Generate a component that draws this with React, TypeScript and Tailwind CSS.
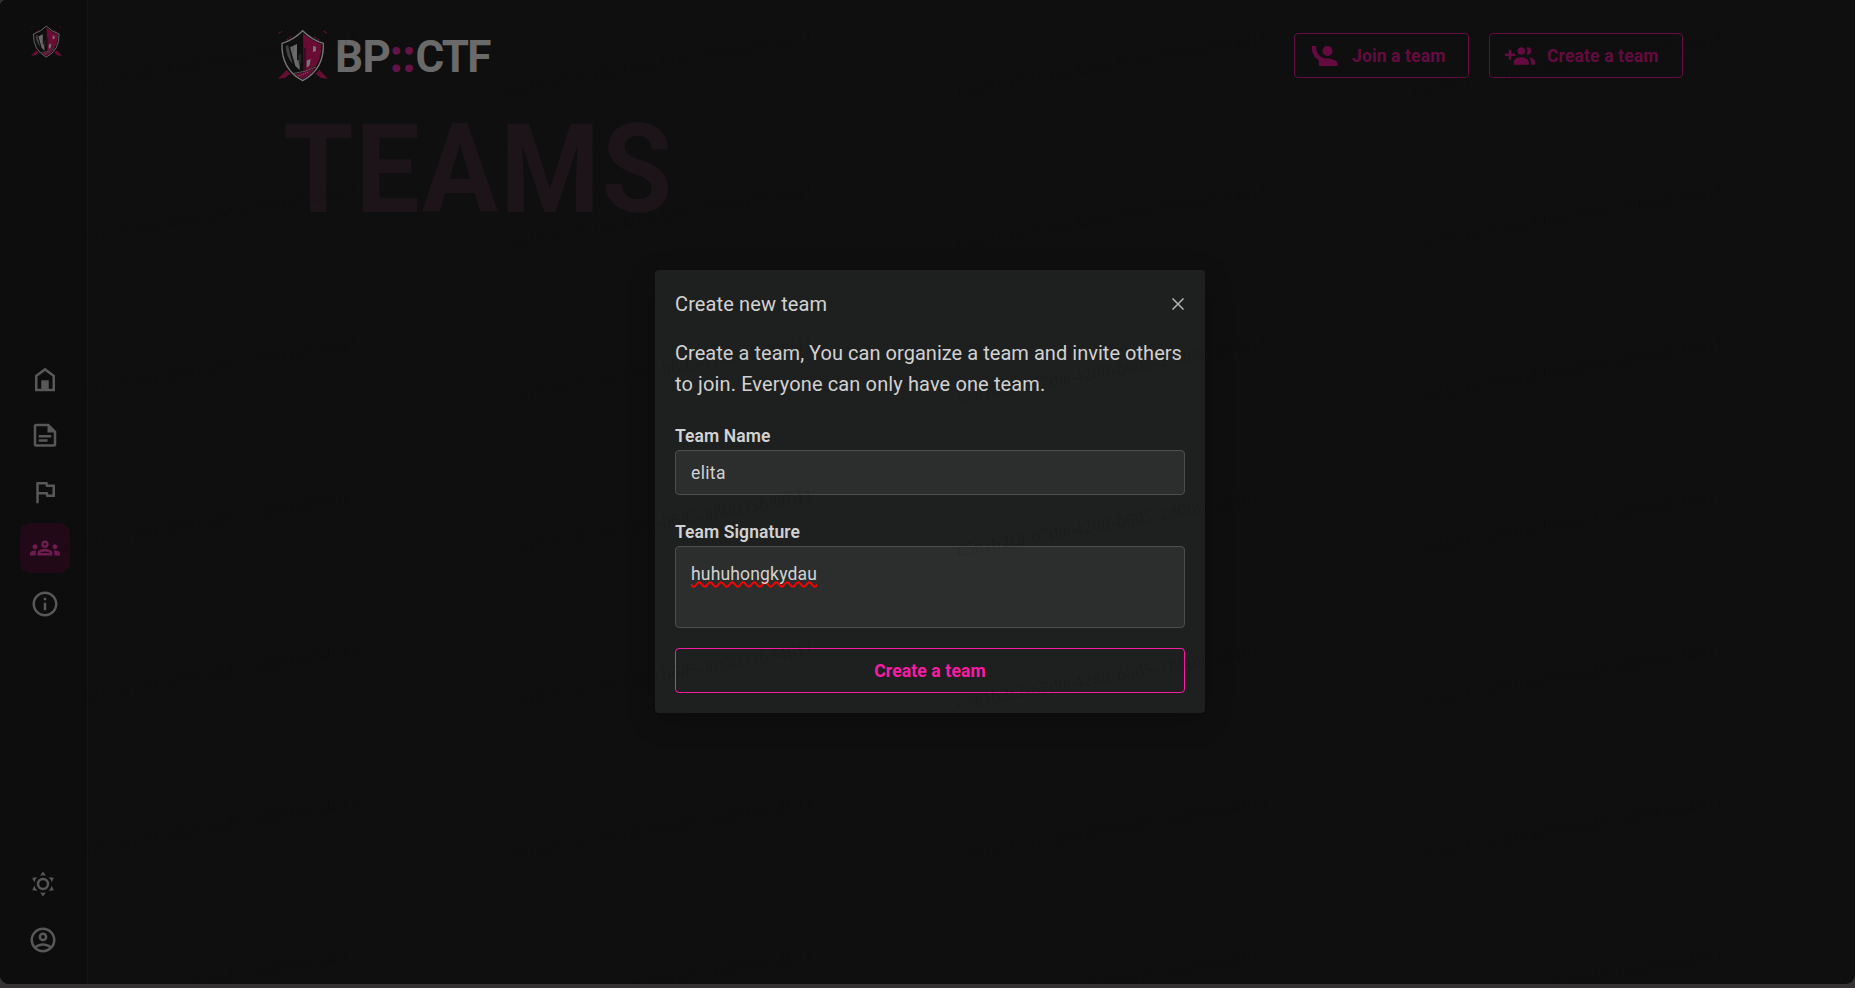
import type { ReactNode } from "react";
import { MdOutlineGroups, MdInfoOutline } from "react-icons/md";

function Icon({ children, className = "" }: { children: ReactNode; className?: string }) {
  return (
    <svg viewBox="0 0 24 24" fill="currentColor" className={`size-[30px] shrink-0 ${className}`}>
      {children}
    </svg>
  );
}

function Shield({ className }: { className: string }) {
  return (
    <svg viewBox="24 27 150 159" className={className}>
      <g stroke="#650d33" fill="none">
        <path d="M26 40l5-4M34 36l3-2M50 62l5-7M58 53l6-3M161 33l9 7M132 50l7 4M142 54l5 8M138 70l8-8M58 70l-7-8" strokeWidth="4" />
      </g>
      <path d="M24 176L50 149l11 12L45 174zM174 176L148 149l-11 12L153 174z" fill="#650d33" />
      <path
        d="M98 32Q126 60 160 70Q163 148 98 182Q33 148 36 70Q70 60 98 32z"
        fill="#101010"
        stroke="#777"
        strokeWidth="4"
      />
      <path d="M99 40Q124 62 155 73Q154 112 138 137L101 156z" fill="#6a0d35" />
      <path d="M105 84V151M97 50V140" stroke="#101010" strokeWidth="3" />
      <path d="M129 78l9 2v13l-9 3zM110 122l12-6-3 20-9 7z" fill="#777" />
      <path d="M60 82l21-10v50l8-6v34l-13-12z" fill="#6a6a6a" />
      <path d="M47 78l7-3 14 57Q49 112 47 78z" fill="#444" />
      <path d="M84 107l10-7v30l-7 5z" fill="#252525" />
      <path d="M72 162Q100 160 136 143Q124 164 98 177Q82 170 72 162z" fill="#650d33" />
      <path d="M72 160Q105 157 138 141" stroke="#777" strokeWidth="2" fill="none" />
      <path d="M86 168l32-13" stroke="#777" strokeWidth="3" strokeDasharray="3 4" fill="none" />
    </svg>
  );
}

function NavButton({ active, children }: { active?: boolean; children: ReactNode }) {
  return (
    <button
      className={`flex size-[50px] items-center justify-center rounded-[10px] ${
        active ? "bg-[#220918] text-[#6e1c52]" : "text-[#585858]"
      }`}
    >
      {children}
    </button>
  );
}

function Sidebar() {
  return (
    <aside className="flex w-[88px] shrink-0 flex-col border-r border-[#151515] bg-[#0d0d0d]">
      <div className="flex h-[355px] shrink-0 items-start pt-[25px] pl-[31px]">
        <Shield className="h-[33px] w-[31px]" />
      </div>
      <nav className="flex flex-col gap-1.5 pl-5">
        <NavButton>
          <Icon>
            <path d="M12 2.200L4 8.200v12.800h16V8.200zm0 2.500l6 4.500v9.800H6V9.200z" />
            <path d="M9 12.200h6v7.300H9z" />
          </Icon>
        </NavButton>
        <NavButton>
          <Icon>
            <path d="M5 2.200a2 2 0 0 0-2 2v14.400a2 2 0 0 0 2 2h14a2 2 0 0 0 2-2V8.200l-6-6zm0 2h9v5h5v9.400H5z" />
            <path d="M7 11.200h10v2H7zM7 14.600h7v2H7z" />
          </Icon>
        </NavButton>
        <NavButton>
          <Icon>
            <path d="m12.360 6 .4 2H18v6h-3.360l-.4-2H7V6h5.360M14 4H5v17h2v-7h5.600l.4 2h7V6h-5.600z" />
          </Icon>
        </NavButton>
        <NavButton active>
          <MdOutlineGroups className="size-[30px]" />
        </NavButton>
        <NavButton>
          <MdInfoOutline className="size-[30px]" />
        </NavButton>
      </nav>
      <div className="mt-auto mb-[19px] flex flex-col gap-1.5 pl-[18px]">
        <NavButton>
          <Icon>
            <path d="M12 7a5 5 0 0 1 5 5 5 5 0 0 1-5 5 5 5 0 0 1-5-5 5 5 0 0 1 5-5m0 2a3 3 0 0 0-3 3 3 3 0 0 0 3 3 3 3 0 0 0 3-3 3 3 0 0 0-3-3m0-7 2.390 3.420C13.650 5.150 12.840 5 12 5s-1.650.15-2.390.42zM3.340 7l4.160-.35A7.200 7.200 0 0 0 5.940 8.500c-.44.74-.69 1.500-.83 2.290zm.02 10 1.760-3.770a7.131 7.131 0 0 0 2.380 4.140zM20.650 7l-1.770 3.790a7.023 7.023 0 0 0-2.380-4.150zm-.01 10-4.140.36c.59-.51 1.120-1.140 1.540-1.860.42-.73.69-1.500.83-2.290zM12 22l-2.410-3.440c.74.27 1.550.44 2.410.44.82 0 1.630-.17 2.370-.44z" />
          </Icon>
        </NavButton>
        <NavButton>
          <Icon>
            <path d="M12 2A10 10 0 0 0 2 12a10 10 0 0 0 10 10 10 10 0 0 0 10-10A10 10 0 0 0 12 2M7.070 18.280c.43-.9 3.050-1.780 4.930-1.780s4.510.88 4.930 1.780A7.893 7.893 0 0 1 12 20c-1.860 0-3.570-.64-4.930-1.720m11.290-1.450c-1.430-1.740-4.900-2.330-6.360-2.330s-4.930.59-6.360 2.330A7.928 7.928 0 0 1 4 12c0-4.410 3.590-8 8-8s8 3.590 8 8c0 1.820-.62 3.500-1.640 4.830M12 6c-1.940 0-3.500 1.560-3.500 3.500S10.060 13 12 13s3.500-1.560 3.500-3.500S13.940 6 12 6m0 5a1.500 1.500 0 0 1-1.500-1.500A1.500 1.500 0 0 1 12 8a1.500 1.500 0 0 1 1.500 1.500A1.500 1.500 0 0 1 12 11" />
          </Icon>
        </NavButton>
      </div>
    </aside>
  );
}

function Header() {
  return (
    <header className="flex h-[78px] items-start justify-between">
      <div className="flex pt-[29px] pl-[3px]">
        <Shield className="h-[53px] w-[50px]" />
        <div className="ml-[7px] pt-px text-[44px] leading-[54px] font-bold tracking-[-0.7px] whitespace-nowrap text-[#6a6a6a]">
          BP
          <span className="font-['Noto_Sans',sans-serif] leading-none tracking-[0.400px] text-[#651248]">::</span>
          <span className="tracking-[-1.900px]">CTF</span>
        </div>
      </div>
      <div className="flex gap-5 pt-[33px] text-[17.500px] font-bold tracking-[0.130px] text-[#650b41]">
        <button className="flex h-[45px] w-[175px] items-center rounded-[4px] border border-[#650b41] pl-[15px] whitespace-nowrap">
          <Icon>
            <path d="M1.500 4v1.500c0 4.150 2.210 7.780 5.500 9.800V20h15v-2c0-2.660-5.330-4-8-4h-.25C9 14 5 10 5 5.500V4m9 0a4 4 0 0 0-4 4 4 4 0 0 0 4 4 4 4 0 0 0 4-4 4 4 0 0 0-4-4Z" />
          </Icon>
          <span className="ml-[12px] pt-[2px]">Join a team</span>
        </button>
        <button className="flex h-[45px] w-[194px] items-center rounded-[4px] border border-[#650b41] pl-[15px] whitespace-nowrap">
          <Icon>
            <path d="M19 17v2H7v-2s0-4 6-4 6 4 6 4m-3-9a3 3 0 1 0-3 3 3 3 0 0 0 3-3m3.200 5.060A5.600 5.600 0 0 1 21 17v2h3v-2s0-3.450-4.800-3.940M18 5a2.910 2.910 0 0 0-.89.14 5 5 0 0 1 0 5.720A2.910 2.910 0 0 0 18 11a3 3 0 0 0 0-6M8 10H5V7H3v3H0v2h3v3h2v-3h3z" />
          </Icon>
          <span className="ml-[12px] pt-[2px]">Create a team</span>
        </button>
      </div>
    </header>
  );
}

function Dialog() {
  return (
    <div className="absolute top-[270px] left-[655px] flex h-[443px] w-[550px] flex-col rounded-[4px] bg-[#1e201f] px-5 text-[#d2d2d2] shadow-[0_8px_30px_rgba(0,0,0,0.2)]">
      <div className="mt-[19px] flex h-[31px] items-center justify-between">
        <h2 className="text-[20px] leading-[31px] tracking-[0.120px]">Create new team</h2>
        <svg viewBox="0 0 12 12" className="mr-[1px] mb-[2px] size-3" stroke="#b5b5b5" strokeWidth="1.500">
          <path d="M.5.5l11 11M11.500.5l-11 11" />
        </svg>
      </div>
      <p className="mt-[18px] text-[20px] leading-[31px] tracking-[0.040px] whitespace-nowrap">
        Create a team, You can organize a team and invite others
        <br />
        <span className="tracking-[0.120px]">to join. Everyone can only have one team.</span>
      </p>
      <label className="mt-[22px] text-[17.500px] leading-7 font-semibold tracking-[0.080px]">Team Name</label>
      <div className="flex h-[45px] items-center rounded-[4px] border border-[#4c4e4d] bg-[#2c2e2d] px-[15px] pt-[2px] text-[17.500px] tracking-[0.350px]">
        elita
      </div>
      <label className="mt-[23px] text-[17.500px] leading-7 font-semibold tracking-[0.080px]">Team Signature</label>
      <div className="h-[82px] rounded-[4px] border border-[#4c4e4d] bg-[#2c2e2d] px-[15px] pt-[13px] text-[17.500px] leading-7 tracking-[0.180px]">
        <span className="underline decoration-[#ff0000] decoration-wavy decoration-[1.600px] underline-offset-[1px] [text-decoration-skip-ink:none]">
          huhuhongkydau
        </span>
      </div>
      <button className="mt-5 h-[45px] rounded-[4px] border border-[#fa1ba5] pt-[2px] text-[17.500px] font-bold tracking-[0.130px] text-[#fa1ba5]">
        Create a team
      </button>
    </div>
  );
}

function Watermark() {
  return (
    <svg className="pointer-events-none absolute inset-0 size-full">
      <defs>
        <pattern id="wm" x="40" y="-50" width="455" height="153" patternUnits="userSpaceOnUse">
          <text
            x="8"
            y="147"
            transform="rotate(-10 8 147)"
            textLength="316"
            fill="#000"
            fillOpacity="0.1"
            fontFamily="Liberation Serif, serif"
            fontSize="18"
          >
            c5e1b2f2-67d0-4268-b6d5-280093b34611
          </text>
        </pattern>
      </defs>
      <rect width="100%" height="100%" fill="url(#wm)" />
    </svg>
  );
}

export default function App() {
  return (
    <div className="h-[988px] w-full overflow-hidden bg-[#343233] pb-1 font-['Roboto',sans-serif]">
      <div className="relative flex h-[984px] overflow-hidden rounded-tl-[6px] rounded-b-[9px] bg-[#0f0f0f]">
        <Sidebar />
        <main className="w-full pr-[172px] pl-[187px]">
          <Header />
          <h1 className="mt-[22px] ml-[8px] w-fit origin-left scale-x-[0.920] text-[124px] leading-[140px] font-bold tracking-[2px] text-[#1c1418]">
            TEAMS
          </h1>
        </main>
        <Dialog />
        <Watermark />
      </div>
    </div>
  );
}
